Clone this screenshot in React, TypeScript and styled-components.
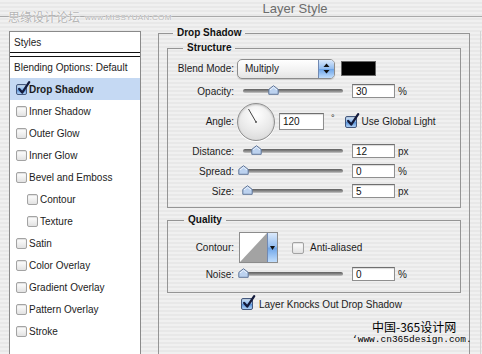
import React from "react";
import styled, { createGlobalStyle } from "styled-components";

const GlobalStyle = createGlobalStyle`
    html, body {
        margin: 0;
        padding: 0;
    }
    body {
        width: 482px;
        height: 354px;
        overflow: hidden;
        background: repeating-linear-gradient(
            to bottom,
            #f0f0f0 0,
            #f0f0f0 2px,
            #e8e8e8 2px,
            #e8e8e8 4px
        );
        font-family: "Liberation Sans", Arial, sans-serif;
        font-size: 10px;
        color: #1c1c1c;
    }
`;

const Window = styled.div`
    position: relative;
    width: 482px;
    height: 354px;
    overflow: hidden;
`;

const TitleBar = styled.div`
    height: 16px;
    border-bottom: 1px solid #a9a9a9;
    display: flex;
    align-items: center;
    justify-content: center;
    padding-left: 108px;
    font-size: 13px;
    color: #6c6c6c;
`;

const Watermark = styled.div`
    position: absolute;
    left: 8px;
    top: 9px;
    display: flex;
    align-items: center;
    gap: 5px;
    font-family: "Noto Sans CJK SC", sans-serif;
    font-size: 12px;
    line-height: 14px;
    color: #b4b4b4;
    text-shadow: 0 0 2px #fff, 0 0 1px #fff;
`;

const WatermarkSite = styled.span`
    font-family: "Liberation Sans", Arial, sans-serif;
    font-size: 8px;
    letter-spacing: 0.3px;
    margin-top: 2px;
`;

const Body = styled.div`
    display: flex;
    align-items: flex-start;
    padding: 10px 0 0 9px;
`;

const StylesPanel = styled.div`
    width: 132px;
    height: 340px;
    margin-top: 4px;
    box-sizing: border-box;
    background: #fff;
    border: 1px solid #8a8a8a;
    display: flex;
    flex-direction: column;
`;

const PanelHeader = styled.div`
    height: 20px;
    display: flex;
    align-items: center;
    padding-left: 4px;
    border-bottom: 1px solid #111;
`;

const HeaderRule = styled.div`
    height: 3px;
    border-bottom: 1px solid #111;
`;

const BlendingRow = styled.div`
    height: 21px;
    display: flex;
    align-items: center;
    padding-left: 4px;
`;

const ListRow = styled.div<{ $indent?: boolean; $active?: boolean }>`
    height: 22px;
    display: flex;
    align-items: center;
    gap: 2px;
    padding-left: ${({ $indent }) => ($indent ? 17 : 6)}px;
    background: ${({ $active }) => ($active ? "#c5d9f3" : "transparent")};
    font-weight: ${({ $active }) => ($active ? "bold" : "normal")};
`;

const Box = styled.span<{ $on?: boolean; $size: number }>`
    position: relative;
    flex: none;
    width: ${({ $size }) => $size}px;
    height: ${({ $size }) => $size}px;
    box-sizing: border-box;
    border: 1px solid ${({ $on }) => ($on ? "#44587d" : "#a3a3a3")};
    border-radius: 2px;
    background: ${({ $on }) =>
        $on
            ? "linear-gradient(#d4e5f9, #86b4ea 50%, #5e97dc 55%, #aed0f6)"
            : "linear-gradient(#ffffff, #e2e2e2)"};
    box-shadow: inset 0 1px 1px rgba(0, 0, 0, 0.12);
`;

const Tick = styled.svg`
    position: absolute;
    left: 0px;
    top: -4px;
    width: 14px;
    height: 14px;
    overflow: visible;
`;

const Check = ({ on, size = 11 }: { on?: boolean; size?: number }) => (
    <Box $on={on} $size={size}>
        {on && (
            <Tick viewBox="0 0 14 14">
                <path
                    d="M2.2 8 L5.2 11.6 L12.2 1.2"
                    fill="none"
                    stroke="#141b3c"
                    strokeWidth="2.3"
                    strokeLinecap="round"
                    strokeLinejoin="round"
                />
            </Tick>
        )}
    </Box>
);

const EffectGroup = styled.fieldset`
    margin: 0 0 0 17px;
    padding: 3px 8px 0 8px;
    width: 312px;
    height: 360px;
    min-width: 0;
    box-sizing: border-box;
    border: 1px solid #959595;
`;

const SubGroup = styled.fieldset<{ $gap?: number; $padTop?: number; $padBottom?: number }>`
    margin: ${({ $gap }) => $gap ?? 0}px 0 0 0;
    padding: ${({ $padTop }) => $padTop ?? 3}px 0 ${({ $padBottom }) => $padBottom ?? 6}px 0;
    min-width: 0;
    border: 1px solid #959595;
`;

const GroupLegend = styled.legend<{ $inset: number }>`
    margin-left: ${({ $inset }) => $inset}px;
    padding: 0 4px;
    font-size: 10px;
    line-height: 12px;
    font-weight: bold;
    color: #111;
`;

const FieldGrid = styled.div<{ $rows: string }>`
    display: grid;
    grid-template-columns: 66px 110px 43px 1fr;
    grid-template-rows: ${({ $rows }) => $rows};
    column-gap: 4px;
    align-items: center;
`;

const FieldLabel = styled.div`
    text-align: right;
    white-space: nowrap;
`;

const Wide = styled.div`
    grid-column: 2 / -1;
    display: flex;
    align-items: center;
    margin-left: -1px;
`;

const Select = styled.div`
    width: 98px;
    height: 20px;
    box-sizing: border-box;
    display: flex;
    border: 1px solid #8c8c8c;
    border-radius: 5px;
    overflow: hidden;
    background: linear-gradient(#ffffff, #f1f1f1 60%, #e4e4e4);
    box-shadow: 0 1px 1px rgba(0, 0, 0, 0.15);
`;

const SelectText = styled.span`
    flex: 1;
    display: flex;
    align-items: center;
    padding-left: 7px;
`;

const AquaButton = styled.span<{ $w: number }>`
    flex: none;
    width: ${({ $w }) => $w}px;
    display: flex;
    align-items: center;
    justify-content: center;
    border-left: 1px solid #7189b2;
    background: linear-gradient(#dbe9fb, #93bdf0 48%, #6ea5e8 52%, #c2defc);
`;

const Swatch = styled.span`
    width: 35px;
    height: 15px;
    margin-left: 6px;
    box-sizing: border-box;
    background: #000;
    border: 1px solid #666;
`;

const SliderWrap = styled.div`
    padding: 0 5px;
`;

const Track = styled.div`
    position: relative;
    width: 100px;
    height: 4px;
    border-radius: 2px;
    background: linear-gradient(#606060, #8a8a8a 55%, #c9c9c9);
`;

const Thumb = styled.svg<{ $pos: number }>`
    position: absolute;
    top: -4px;
    left: ${({ $pos }) => $pos - 5}px;
    width: 11px;
    height: 10px;
`;

const Slider = ({ pos }: { pos: number }) => (
    <SliderWrap>
        <Track>
            <Thumb $pos={pos} viewBox="0 0 11 10">
                <path
                    d="M5.5 0.7 L10.2 4.4 V9.3 H0.8 V4.4 Z"
                    fill="#bcd2ef"
                    stroke="#5f7598"
                    strokeWidth="1"
                    strokeLinejoin="round"
                />
                <path d="M2 5 L5.5 2.2 L9 5" fill="none" stroke="#eef5ff" strokeWidth="1" />
            </Thumb>
        </Track>
    </SliderWrap>
);

const NumberField = styled.input<{ $w?: number; $h?: number; $ml?: number }>`
    width: ${({ $w }) => $w ?? 43}px;
    height: ${({ $h }) => $h ?? 14}px;
    box-sizing: border-box;
    margin: 0 0 0 ${({ $ml }) => $ml ?? 0}px;
    padding: 0 3px;
    border: 1px solid #8f8f8f;
    border-top-color: #6f6f6f;
    background: #fff;
    box-shadow: inset 0 1px 1px rgba(0, 0, 0, 0.15);
    font-family: "Liberation Sans", Arial, sans-serif;
    font-size: 10px;
    color: #111;
    outline: none;
`;

const Unit = styled.span`
    margin-left: -1px;
`;

const Dial = styled.div`
    flex: none;
    width: 38px;
    height: 38px;
    box-sizing: border-box;
    border-radius: 50%;
    border: 1px solid #8e8e8e;
    background: radial-gradient(circle at 50% 30%, #ffffff, #e9e9e9 55%, #d2d2d2);
    box-shadow: inset 0 1px 2px rgba(0, 0, 0, 0.2), 0 1px 0 #fff;
`;

const Degree = styled.span`
    margin: 0 0 8px 7px;
    font-size: 9px;
`;

const InlineCheck = styled.label<{ $gap: number; $offset: number }>`
    display: flex;
    align-items: center;
    gap: ${({ $gap }) => $gap}px;
    margin-left: ${({ $offset }) => $offset}px;
    white-space: nowrap;
`;

const ContourPreview = styled.div`
    flex: none;
    width: 39px;
    height: 31px;
    margin-left: 2px;
    box-sizing: border-box;
    display: flex;
    border: 1px solid #8c8c8c;
    background: #fff;
`;

const ContourCurve = styled.svg`
    flex: 1;
    height: 100%;
`;

const KnockoutRow = styled.div`
    margin-top: 4px;
    padding-left: 74px;
    height: 14px;
    display: flex;
    align-items: center;
`;

const SideRule = styled.div`
    align-self: stretch;
    height: 340px;
    margin: 4px 0 0 10px;
    border-left: 1px solid #d4d4d4;
`;

const SiteMark = styled.div`
    position: absolute;
    left: 352px;
    top: 319px;
    display: flex;
    flex-direction: column;
    color: #000;
`;

const SiteName = styled.span`
    padding-left: 20px;
    font-family: "Noto Sans CJK SC", sans-serif;
    font-size: 12px;
    line-height: 15px;
`;

const SiteUrl = styled.span`
    font-family: "Liberation Mono", "Courier New", monospace;
    font-size: 9.5px;
    line-height: 12px;
`;

const styleItems = [
    { label: "Drop Shadow", checked: true },
    { label: "Inner Shadow" },
    { label: "Outer Glow" },
    { label: "Inner Glow" },
    { label: "Bevel and Emboss" },
    { label: "Contour", sub: true },
    { label: "Texture", sub: true },
    { label: "Satin" },
    { label: "Color Overlay" },
    { label: "Gradient Overlay" },
    { label: "Pattern Overlay" },
    { label: "Stroke" },
];

const sliderRows = [
    { label: "Distance:", pos: 13, value: "12", unit: "px" },
    { label: "Spread:", pos: 0, value: "0", unit: "%" },
    { label: "Size:", pos: 4, value: "5", unit: "px" },
];

export default function App() {
    return (
        <>
            <GlobalStyle />
            <Window>
                <TitleBar>Layer Style</TitleBar>
                <Watermark>
                    思缘设计论坛
                    <WatermarkSite>www.MISSYUAN.COM</WatermarkSite>
                </Watermark>
                <Body>
                    <StylesPanel>
                        <PanelHeader>Styles</PanelHeader>
                        <HeaderRule />
                        <BlendingRow>Blending Options: Default</BlendingRow>
                        {styleItems.map((item) => (
                            <ListRow
                                key={item.label + (item.sub ? "-sub" : "")}
                                $indent={item.sub}
                                $active={item.checked}
                            >
                                <Check on={item.checked} />
                                {item.label}
                            </ListRow>
                        ))}
                    </StylesPanel>

                    <EffectGroup>
                        <GroupLegend $inset={6}>Drop Shadow</GroupLegend>
                        <SubGroup>
                            <GroupLegend $inset={15}>Structure</GroupLegend>
                            <FieldGrid $rows="23px 22px 39px 20px 20px 20px">
                                <FieldLabel>Blend Mode:</FieldLabel>
                                <Wide>
                                    <Select>
                                        <SelectText>Multiply</SelectText>
                                        <AquaButton $w={15}>
                                            <svg width="7" height="11" viewBox="0 0 7 11">
                                                <path d="M3.5 0.5 L6.5 4 H0.5 Z" fill="#111" />
                                                <path d="M3.5 10.5 L6.5 7 H0.5 Z" fill="#111" />
                                            </svg>
                                        </AquaButton>
                                    </Select>
                                    <Swatch />
                                </Wide>

                                <FieldLabel>Opacity:</FieldLabel>
                                <Slider pos={30} />
                                <NumberField readOnly value="30" />
                                <Unit>%</Unit>

                                <FieldLabel>Angle:</FieldLabel>
                                <Wide>
                                    <Dial>
                                        <svg width="36" height="36" viewBox="0 0 36 36">
                                            <line
                                                x1="18"
                                                y1="18"
                                                x2="10.5"
                                                y2="5"
                                                stroke="#444"
                                                strokeWidth="1"
                                            />
                                            <circle cx="18" cy="18" r="1" fill="#555" />
                                        </svg>
                                    </Dial>
                                    <NumberField readOnly value="120" $w={45} $h={17} $ml={4} />
                                    <Degree>°</Degree>
                                    <InlineCheck $gap={5} $offset={10}>
                                        <Check on size={12} />
                                        Use Global Light
                                    </InlineCheck>
                                </Wide>

                                {sliderRows.map((row) => (
                                    <React.Fragment key={row.label}>
                                        <FieldLabel>{row.label}</FieldLabel>
                                        <Slider pos={row.pos} />
                                        <NumberField readOnly value={row.value} />
                                        <Unit>{row.unit}</Unit>
                                    </React.Fragment>
                                ))}
                            </FieldGrid>
                        </SubGroup>

                        <SubGroup $gap={6} $padTop={5} $padBottom={8}>
                            <GroupLegend $inset={16}>Quality</GroupLegend>
                            <FieldGrid $rows="33px 20px">
                                <FieldLabel>Contour:</FieldLabel>
                                <Wide>
                                    <ContourPreview>
                                        <ContourCurve viewBox="0 0 29 29" preserveAspectRatio="none">
                                            <path d="M0 29 L29 0 V29 Z" fill="#a3a3a3" />
                                        </ContourCurve>
                                        <AquaButton $w={9}>
                                            <svg width="5" height="4" viewBox="0 0 5 4">
                                                <path d="M0 0 H5 L2.5 4 Z" fill="#111" />
                                            </svg>
                                        </AquaButton>
                                    </ContourPreview>
                                    <InlineCheck $gap={6} $offset={14}>
                                        <Check size={12} />
                                        Anti-aliased
                                    </InlineCheck>
                                </Wide>

                                <FieldLabel>Noise:</FieldLabel>
                                <Slider pos={0} />
                                <NumberField readOnly value="0" />
                                <Unit>%</Unit>
                            </FieldGrid>
                        </SubGroup>

                        <KnockoutRow>
                            <InlineCheck $gap={6} $offset={0}>
                                <Check on size={12} />
                                Layer Knocks Out Drop Shadow
                            </InlineCheck>
                        </KnockoutRow>
                    </EffectGroup>
                    <SideRule />
                </Body>

                <SiteMark>
                    <SiteName>中国-365设计网</SiteName>
                    <SiteUrl>‘www.cn365design.com.</SiteUrl>
                </SiteMark>
            </Window>
        </>
    );
}
